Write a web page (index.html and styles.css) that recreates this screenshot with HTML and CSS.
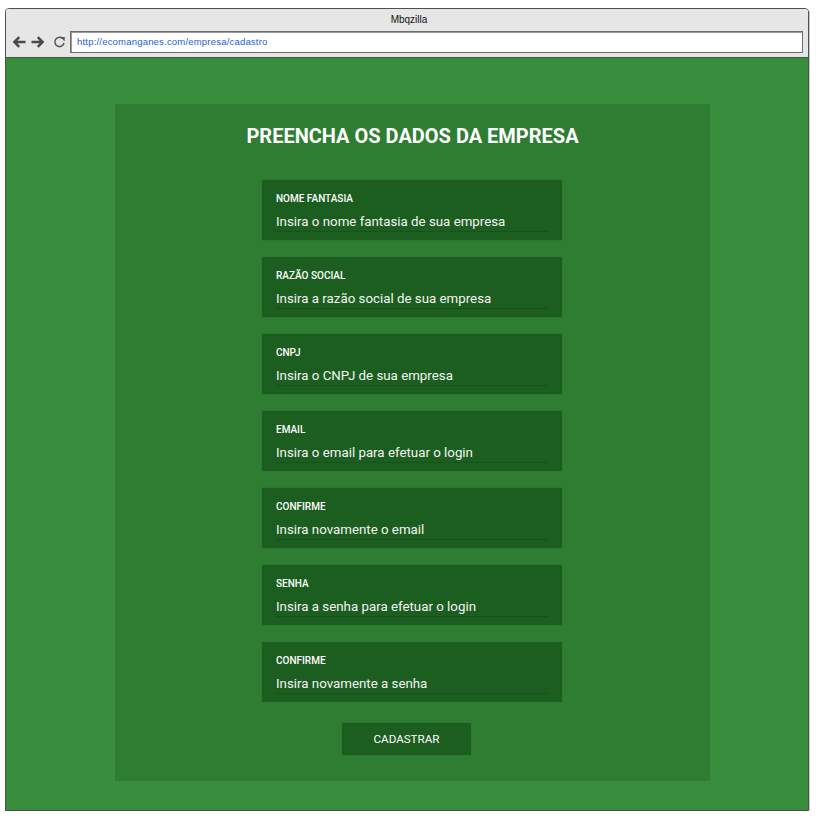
FILE: index.html
```html
<!DOCTYPE html>
<html lang="pt-BR">
<head>
<meta charset="utf-8">
<title>Cadastro de empresa</title>
<link rel="stylesheet" href="styles.css">
</head>
<body>
<div class="window">
  <div class="chrome">
    <div class="chrome-title">Mbqzilla</div>
    <div class="chrome-nav">
      <div class="nav-icons">
        <svg class="nav-icon" width="14" height="14" viewBox="0 0 14 14"><path d="M13.5 7H2.5M7.2 2.2L2.4 7l4.8 4.8" fill="none" stroke="#4a4a4a" stroke-width="2.5"/></svg>
        <svg class="nav-icon" width="14" height="14" viewBox="0 0 14 14"><path d="M0.5 7h11M6.8 2.2L11.6 7l-4.8 4.8" fill="none" stroke="#4a4a4a" stroke-width="2.5"/></svg>
        <svg class="nav-icon reload" width="13" height="14" viewBox="0 0 13 14"><path d="M11 8a4.6 4.6 0 1 1-1.6-4.6" fill="none" stroke="#555" stroke-width="1.5"/><path d="M7.6 1.8L12 2.2 11.4 6.4Z" fill="#555"/></svg>
      </div>
      <div class="address">http://ecomanganes.com/empresa/cadastro</div>
    </div>
  </div>
  <div class="viewport">
    <div class="panel">
      <h1 class="panel-title">PREENCHA OS DADOS DA EMPRESA</h1>
      <div class="fields">
        <div class="field">
          <div class="field-label">NOME FANTASIA</div>
          <div class="field-input">Insira o nome fantasia de sua empresa</div>
        </div>
        <div class="field">
          <div class="field-label">RAZÃO SOCIAL</div>
          <div class="field-input">Insira a razão social de sua empresa</div>
        </div>
        <div class="field">
          <div class="field-label">CNPJ</div>
          <div class="field-input">Insira o CNPJ de sua empresa</div>
        </div>
        <div class="field">
          <div class="field-label">EMAIL</div>
          <div class="field-input">Insira o email para efetuar o login</div>
        </div>
        <div class="field">
          <div class="field-label">CONFIRME</div>
          <div class="field-input">Insira novamente o email</div>
        </div>
        <div class="field">
          <div class="field-label">SENHA</div>
          <div class="field-input">Insira a senha para efetuar o login</div>
        </div>
        <div class="field">
          <div class="field-label">CONFIRME</div>
          <div class="field-input">Insira novamente a senha</div>
        </div>
      </div>
      <button class="submit" type="button">CADASTRAR</button>
    </div>
  </div>
</div>
</body>
</html>
```

FILE: styles.css
```css
html, body {
  margin: 0;
  padding: 0;
  background: #ffffff;
}

body {
  padding: 8px 0 0 5px;
  font-family: "Liberation Sans", Arial, sans-serif;
}

.window {
  box-sizing: border-box;
  width: 804px;
  height: 803px;
  border: 1px solid #4f4f4f;
  border-radius: 4px 4px 0 0;
  display: flex;
  flex-direction: column;
  box-shadow: 1px 1px 0 #c8c8c8;
  overflow: hidden;
}

.chrome {
  background: #e6e6e6;
  border-bottom: 1px solid #4f4f4f;
  padding-bottom: 4px;
}

.chrome-title {
  height: 22px;
  line-height: 21px;
  text-align: center;
  font-size: 10px;
  color: #111;
  padding-left: 4px;
}

.chrome-nav {
  display: flex;
  align-items: center;
  height: 22px;
}

.nav-icons {
  width: 64px;
  display: flex;
  align-items: center;
  padding-left: 6px;
  box-sizing: border-box;
  gap: 5px;
}

.nav-icon.reload {
  margin-left: 3px;
}

.address {
  flex: 1;
  margin-right: 5px;
  height: 22px;
  box-sizing: border-box;
  border: 1px solid #6e6e6e;
  box-shadow: inset 1px 1px 0 #9a9a9a;
  background: #ffffff;
  color: #1a62d6;
  font-size: 9.5px;
  letter-spacing: 0.2px;
  word-spacing: 1px;
  line-height: 20px;
  padding-left: 6px;
}

.viewport {
  flex: 1;
  background: #388e3c;
  padding-top: 46px;
  padding-left: 109px;
}

.panel {
  width: 595px;
  box-sizing: border-box;
  background: #2e7d32;
  padding: 20px 0 26px;
  display: flex;
  flex-direction: column;
  align-items: center;
  font-family: Roboto, "Liberation Sans", sans-serif;
}

.panel-title {
  margin: 0;
  font-size: 20px;
  line-height: 24px;
  font-weight: 700;
  color: #ffffff;
}

.fields {
  margin-top: 32px;
  margin-right: 1px;
  display: flex;
  flex-direction: column;
  gap: 17px;
}

.field {
  width: 300px;
  height: 60px;
  box-sizing: border-box;
  background: #1b5e20;
  box-shadow: 0 0 0 1px rgba(0, 0, 0, 0.04);
  padding: 13px 14px 0;
}

.field-label {
  font-size: 10px;
  line-height: 12px;
  font-weight: 500;
  color: #ffffff;
}

.field-input {
  margin-top: 8px;
  padding-bottom: 1px;
  font-size: 13.3px;
  line-height: 17px;
  color: #f4f4f4;
  border-bottom: 1px solid #17511b;
}

.submit {
  margin-top: 21px;
  margin-right: 12px;
  width: 129px;
  height: 32px;
  border: none;
  background: #1b5e20;
  box-shadow: 0 0 0 1px rgba(0, 0, 0, 0.04);
  color: #ffffff;
  font-family: Roboto, "Liberation Sans", sans-serif;
  font-size: 11.6px;
  padding: 0;
  cursor: pointer;
}
```
